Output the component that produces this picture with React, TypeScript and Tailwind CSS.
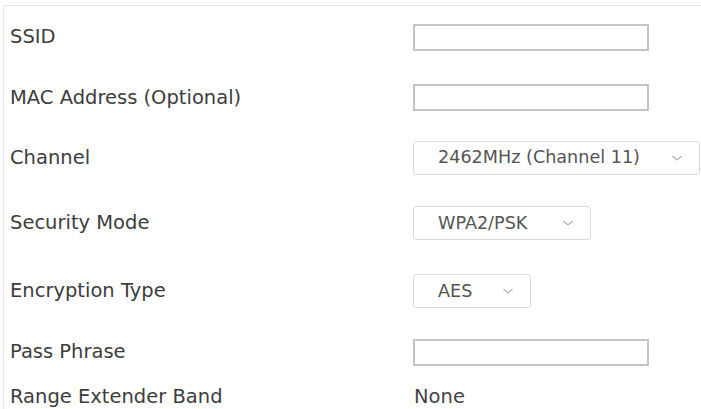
const font = { fontFamily: '"DejaVu Sans", Verdana, sans-serif' };

function Chevron() {
  return (
    <svg width="12" height="8" viewBox="0 0 12 8" className="shrink-0">
      <path d="M1.5 2 L6 6 L10.5 2" fill="none" stroke="#b5b5b5" strokeWidth="1.3" />
    </svg>
  );
}

function TextBox() {
  return <div className="h-[27px] w-[236px] border-2 border-[#c4c4c4] bg-white" />;
}

function Select({ value, width }: { value: string; width: string }) {
  return (
    <div
      className={`flex h-[34px] items-center justify-between rounded-[3px] border border-[#dcdcdc] bg-white pl-[24px] pr-[16px] text-[17.6px] text-[#555] ${width}`}
    >
      <span>{value}</span>
      <Chevron />
    </div>
  );
}

const rows: { label: string; h: string; field: React.ReactNode }[] = [
  { label: "SSID", h: "h-[62px]", field: <TextBox /> },
  { label: "MAC Address (Optional)", h: "h-[59px]", field: <TextBox /> },
  {
    label: "Channel",
    h: "h-[61px]",
    field: <Select value="2462MHz (Channel 11)" width="w-[287px]" />,
  },
  { label: "Security Mode", h: "h-[70px]", field: <Select value="WPA2/PSK" width="w-[178px]" /> },
  { label: "Encryption Type", h: "h-[66px]", field: <Select value="AES" width="w-[118px]" /> },
  { label: "Pass Phrase", h: "h-[56px]", field: <TextBox /> },
  {
    label: "Range Extender Band",
    h: "h-[34px]",
    field: <span className="pl-[1px] text-[#444]">None</span>,
  },
];

export default function App() {
  return (
    <div className="h-[409px] w-[701px] overflow-hidden bg-white pl-[3px] pt-[5px]" style={font}>
      <div className="h-full border-l border-t border-[#e6e6e6] pl-[6px] text-[19.5px] text-[#3d3d3d]">
        {rows.map((r) => (
          <div key={r.label} className={`grid grid-cols-[403px_1fr] items-center ${r.h}`}>
            <span>{r.label}</span>
            <div>{r.field}</div>
          </div>
        ))}
      </div>
    </div>
  );
}
